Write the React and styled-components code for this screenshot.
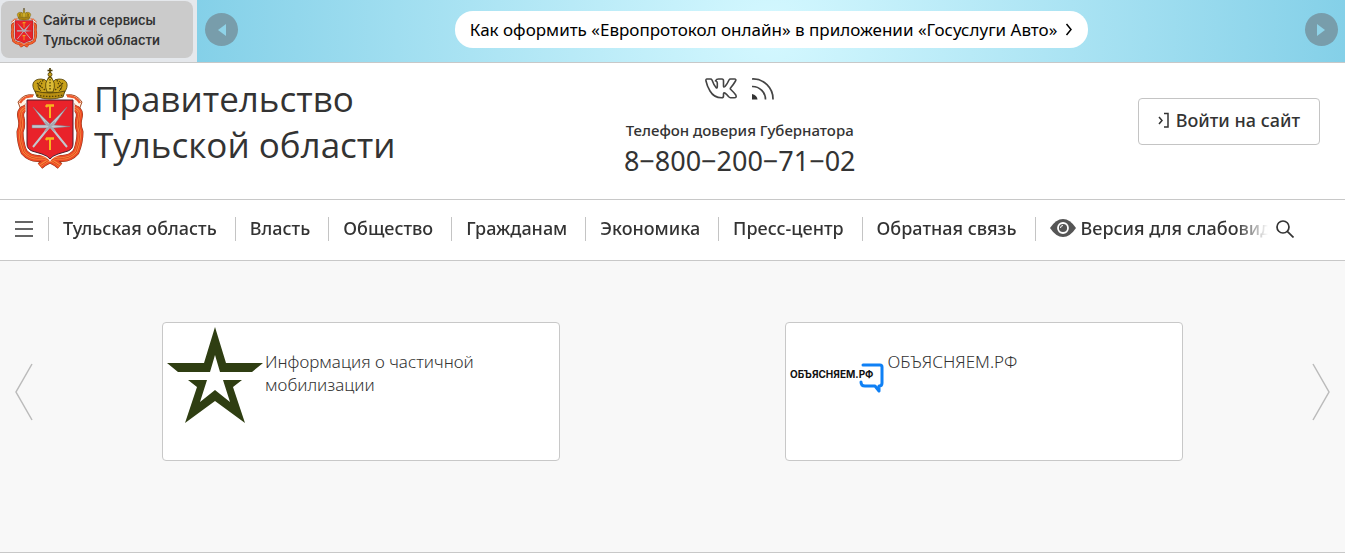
import React from 'react'
import styled, { createGlobalStyle } from 'styled-components'

const menu = [
    'Тульская область',
    'Власть',
    'Общество',
    'Гражданам',
    'Экономика',
    'Пресс-центр',
    'Обратная связь',
]

const ribbon = 'M10 40 Q3 42 5 50 Q7 57 4 64 Q4 74 8 84 Q15 92 26 90 Q36 91 44 98 M58 40 Q65 42 63 50 Q61 57 64 64 Q64 74 60 84 Q53 92 42 90 Q32 91 24 98'

const Emblem = ({ className }) => (
    <svg className={className} viewBox="0 0 68 102" aria-hidden="true">
        {/* ribbon */}
        <g fill="none" strokeLinejoin="round">
            <path d="M18 27 Q8 25 2 34 L5 42 L9 37 L12 32 M50 27 Q60 25 66 34 L63 42 L59 37 L56 32" fill="#fff3e4" stroke="#a64a20" strokeWidth="1" />
            <path d="M17 28 Q8 28 4 35 M51 28 Q60 28 64 35" stroke="#ee5a2c" strokeWidth="2.500" />
            <path d={ribbon} stroke="#8a3517" strokeWidth="7" />
            <path d={ribbon} stroke="#ec4a26" strokeWidth="6" />
            <path d={ribbon} stroke="#f98a3c" strokeWidth="2.400" />
            <path d={ribbon} stroke="#dd4520" strokeWidth="1" />
        </g>
        {/* shield */}
        <path d="M11 32 H57 V76 Q57 81 52 83 L42 86 Q36 88 34 91 Q32 88 26 86 L16 83 Q11 81 11 76 Z" fill="#e9222a" stroke="#fff" strokeWidth="3" />
        <path d="M11 32 H57 V76 Q57 81 52 83 L42 86 Q36 88 34 91 Q32 88 26 86 L16 83 Q11 81 11 76 Z" fill="#e9222a" stroke="#4f1a28" strokeWidth="1" />
        <g stroke="#f7b51e" fill="none">
            <path d="M34 37 V50 M34 71 V82" strokeWidth="2" />
            <path d="M30 39 L31 37.500 H38 M30 72 L31 70.500 H38" strokeWidth="2.500" />
        </g>
        <g fill="#c3c6cd" stroke="#7b7f89" strokeWidth="0.500">
            <path d="M17 39 L32 60 L35 57 Z" />
            <path d="M51 39 L36 60 L33 57 Z" />
            <path d="M16 57 H38 L54 58.500 L38 60 H16 Z" />
        </g>
        <path d="M34 58 L51 79 M34 58 L17 79" stroke="#c3c6cd" strokeWidth="2" />
        <path d="M29 54 L39 63 M39 54 L29 63" stroke="#a5a9b2" strokeWidth="2" />
        {/* crown */}
        <g stroke="#4c3c06" strokeWidth="0.800" fill="#c9a21a">
            <path d="M20 25 C14 17 17 11 25 11 Q30 11 31 14 Q32 8 34 8 Q36 8 37 14 Q38 11 43 11 C51 11 54 17 48 25 Z" />
            <path d="M19 23 Q34 27 49 23 L47 29 Q34 33 21 29 Z" fill="#b98f12" />
            <path d="M31 24 Q27 14 34 9 Q41 14 37 24 Z" fill="#dcbc35" />
            <path d="M25 23 Q19 18 25 13 M43 23 Q49 18 43 13" fill="none" />
            <circle cx="34" cy="6.500" r="2" />
            <path d="M34 5 V0 M31.500 2.500 H36.500" strokeWidth="1.600" />
        </g>
        <path d="M21 27 Q34 30 47 27 M21 15 L29 22 M47 15 L39 22 M27 12 L23 22 M41 12 L45 22 M34 11 V23" stroke="#544307" strokeWidth="1.300" strokeDasharray="1.500 1.500" fill="none" />
    </svg>
)

const VkIcon = () => (
    <svg width="32" height="21" viewBox="0 0 32 21" fill="none" stroke="#444" strokeWidth="1.6" strokeLinejoin="round" aria-hidden="true">
        <path d="M2 1 H5.500 Q6.500 1 7 2 Q9 7.500 11 9.500 Q12.300 10.500 12.300 8.500 V5 Q12.300 3.500 10.500 2.800 Q11.500 1 13.500 1 H17 Q18.500 1 18.500 2.800 V8 Q18.500 9.800 20 8.500 Q22.500 5.500 24 2 Q24.500 1 25.500 1 H29.500 Q31.500 1 30.500 3 Q28.500 6.500 25.500 10 Q25 10.800 25.800 11.500 Q29 14.500 30.800 17 Q32 19.800 29.200 19.800 H25.500 Q24.500 19.800 23.500 18.600 Q21.500 16 19.800 15 Q18.500 14.500 18.500 16 V18 Q18.500 19.800 16.500 19.800 Q9 19.800 5 13 Q2 8 1 3 Q0.600 1 2 1 Z" />
    </svg>
)

const RssIcon = () => (
    <svg width="22" height="22" viewBox="0 0 22 22" fill="none" stroke="#444" strokeWidth="1.7" aria-hidden="true">
        <path d="M0 1 A20 20 0 0 1 21 21.500" />
        <path d="M0 8.500 A13 13 0 0 1 13.500 21.500" />
        <path d="M0 16 Q5 17 5.500 21.500 H0 Z" fill="#333" stroke="none" />
    </svg>
)

const StarLogo = () => (
    <svg width="100" height="100" viewBox="0 0 100 100" fill="#2f3e12" aria-hidden="true">
        <path d="M50 1 L61 37 H98 L87 46 H55 L50 29 L45 46 H13 L2 37 H39 Z" />
        <path d="M23 54 H42 L35 76 L50 64 L65 76 L58 54 H77 L68 61 L80 97 L50 75 L20 97 L32 61 Z" />
    </svg>
)

const ExplainLogo = () => (
    <svg width="100" height="100" viewBox="0 0 100 100" aria-hidden="true">
        <path d="M75 39 H92 Q94 39 94 41 V57 Q94 60 91 60 M73 56 Q73 60 77 60 H87 L91 65 V60" fill="none" stroke="#0f80f5" strokeWidth="3" strokeLinejoin="round" strokeLinecap="round" />
        <LogoText x="2" y="52">ОБЪЯСНЯЕМ.РФ</LogoText>
    </svg>
)

const App = () => {
    return (
        <Page>
            <GlobalStyle />
            <TopBar>
                <ServicesWrapper>
                    <ServicesLink href="#services">
                        <SmallEmblem />
                        <span>Сайты и сервисы<br />Тульской области</span>
                    </ServicesLink>
                </ServicesWrapper>
                <Banner>
                    <RoundButton aria-label="Назад">
                        <svg width="8" height="12" viewBox="0 0 8 12"><path d="M8 0 V12 L0 6 Z" fill="#8fd3e8" /></svg>
                    </RoundButton>
                    <BannerLink href="#europrotocol">
                        Как оформить «Европротокол онлайн» в приложении «Госуслуги Авто»
                        <svg width="8" height="13" viewBox="0 0 8 13" fill="none" stroke="#000" strokeWidth="1.5"><path d="M1.500 1 L6 6.500 L1.500 12" /></svg>
                    </BannerLink>
                    <RoundButton aria-label="Вперёд">
                        <svg width="8" height="12" viewBox="0 0 8 12"><path d="M0 0 V12 L8 6 Z" fill="#8fd3e8" /></svg>
                    </RoundButton>
                </Banner>
            </TopBar>
            <Header>
                <Brand href="#home">
                    <LargeEmblem />
                    <BrandName>Правительство<br />Тульской области</BrandName>
                </Brand>
                <Contacts>
                    <Socials>
                        <a href="#vk" aria-label="ВКонтакте"><VkIcon /></a>
                        <a href="#rss" aria-label="RSS"><RssIcon /></a>
                    </Socials>
                    <PhoneLabel>Телефон доверия Губернатора</PhoneLabel>
                    <Phone href="tel:88002007102">8−800−200−71−02</Phone>
                </Contacts>
                <LoginWrapper>
                    <LoginButton>
                        <svg width="12" height="16" viewBox="0 0 12 16" fill="none" stroke="#333" strokeWidth="1.5"><path d="M1 5 L4 8.500 L1 12 M6 1.500 H10 V15 H6" /></svg>
                        Войти на сайт
                    </LoginButton>
                </LoginWrapper>
            </Header>
            <Nav>
                <IconButton aria-label="Меню">
                    <svg width="18" height="16" viewBox="0 0 18 16" stroke="#333" strokeWidth="1.6"><path d="M0 1 H18 M0 8 H18 M0 15 H18" /></svg>
                </IconButton>
                <MenuList>
                    {
                        menu.map(item => (
                            <MenuItem key={item}><MenuLink href="#menu">{item}</MenuLink></MenuItem>
                        ))
                    }
                    <MenuItem>
                        <MenuLink href="#vision">
                            <svg width="26" height="18" viewBox="0 0 26 18"><path d="M0 9 Q6 0 13 0 T26 9 Q20 18 13 18 T0 9 Z" fill="#555" /><circle cx="13" cy="9" r="5" fill="#555" stroke="#fff" strokeWidth="1.800" /><path d="M13 6.500 A2.500 2.500 0 0 0 10.500 9" fill="none" stroke="#fff" strokeWidth="1" /></svg>
                            Версия для слабовидящих
                        </MenuLink>
                    </MenuItem>
                </MenuList>
                <IconButton aria-label="Поиск">
                    <svg width="18" height="18" viewBox="0 0 18 18" fill="none" stroke="#333" strokeWidth="1.700"><circle cx="7" cy="7" r="6" /><path d="M11.300 11.300 L17.500 17.500" /></svg>
                </IconButton>
            </Nav>
            <Slider>
                <SliderButton aria-label="Предыдущий слайд">
                    <svg width="18" height="58" viewBox="0 0 18 58" fill="none" stroke="#bbb" strokeWidth="1.500"><path d="M17 1 L1 29 L17 57" /></svg>
                </SliderButton>
                <Slides>
                    <Card href="#mobilization">
                        <StarLogo />
                        <CardText>Информация о частичной мобилизации</CardText>
                    </Card>
                    <Card href="#explain">
                        <ExplainLogo />
                        <CardText>ОБЪЯСНЯЕМ.РФ</CardText>
                    </Card>
                </Slides>
                <SliderButton aria-label="Следующий слайд">
                    <svg width="18" height="58" viewBox="0 0 18 58" fill="none" stroke="#bbb" strokeWidth="1.500"><path d="M1 1 L17 29 L1 57" /></svg>
                </SliderButton>
            </Slider>
        </Page>
    )
}

const GlobalStyle = createGlobalStyle`
* {
  box-sizing: border-box;
}
body {
  margin: 0;
  background: #fff;
}
a {
  color: inherit;
  text-decoration: none;
}
button {
  font-family: inherit;
  color: inherit;
  cursor: pointer;
}
svg {
  display: block;
  flex-shrink: 0;
}
`

const Page = styled.div`
font-family: "Noto Sans", "Open Sans", sans-serif;
color: #333;
`

const TopBar = styled.div`
display: flex;
height: 63px;
border-bottom: 1px solid #c8c8c8;
`

const ServicesWrapper = styled.div`
width: 197px;
flex-shrink: 0;
padding: 1px 4px 4px 1px;
background: #e5e8ec;
`

const ServicesLink = styled.a`
display: flex;
align-items: center;
gap: 5px;
height: 57px;
padding: 0 9px;
border-radius: 8px;
background: #cbcbcb;
font-family: Inter, sans-serif;
font-size: 13px;
font-weight: 600;
line-height: 20px;
white-space: nowrap;
`

const SmallEmblem = styled(Emblem)`
width: 28px;
height: 40px;
margin-bottom: 4px;
`

const Banner = styled.div`
flex: 1;
display: flex;
align-items: flex-start;
justify-content: space-between;
padding: 11px 7px 0 8px;
background: radial-gradient(circle, #d4f8ff 0%, #84d0e8 100%);
`

const RoundButton = styled.button`
display: flex;
align-items: center;
justify-content: center;
width: 33px;
height: 33px;
margin-top: 2px;
padding: 0;
border: none;
border-radius: 50%;
background: #789dab;
`

const BannerLink = styled.a`
display: flex;
align-items: center;
gap: 8px;
height: 37px;
padding: 0 15px;
border-radius: 18px;
background: #fff;
color: #000;
font-size: 17px;
`

const Header = styled.header`
display: grid;
grid-template-columns: 45% 21% 34%;
height: 137px;
padding: 0 25px 0 16px;
border-bottom: 1px solid #c8c8c8;
`

const Brand = styled.a`
display: flex;
align-items: flex-start;
gap: 10px;
padding-top: 5px;
`

const LargeEmblem = styled(Emblem)`
width: 68px;
height: 102px;
`

const BrandName = styled.span`
padding-top: 8px;
font-family: "Open Sans", sans-serif;
font-size: 35px;
line-height: 46px;
white-space: nowrap;
`

const Contacts = styled.div`
display: flex;
flex-direction: column;
align-items: center;
padding-top: 15px;
white-space: nowrap;
`

const Socials = styled.div`
display: flex;
gap: 15px;
height: 42px;
`

const PhoneLabel = styled.div`
font-size: 15px;
font-weight: 500;
line-height: 20px;
`

const Phone = styled.a`
font-size: 27px;
line-height: 42px;
`

const LoginWrapper = styled.div`
display: flex;
align-items: flex-start;
justify-content: flex-end;
padding-top: 35px;
`

const LoginButton = styled.button`
display: flex;
align-items: center;
gap: 6px;
height: 47px;
padding: 0 19px 4px;
border: 1px solid #c4c4c4;
border-radius: 4px;
background: #fff;
font-size: 18px;
font-weight: 500;
`

const Nav = styled.nav`
display: flex;
align-items: center;
height: 61px;
padding: 0 51px 2px 15px;
border-bottom: 1px solid #c8c8c8;
`

const IconButton = styled.button`
padding: 0;
border: none;
background: none;
`

const MenuList = styled.ul`
flex: 1;
min-width: 0;
display: flex;
gap: 18px;
margin: 0 8px 0 15px;
padding: 0;
overflow: hidden;
list-style: none;
mask-image: linear-gradient(to left, transparent, #000 32px);
`

const MenuItem = styled.li`
flex-shrink: 0;
height: 24px;
padding-left: 14px;
border-left: 1px solid #c4c4c4;
`

const MenuLink = styled.a`
display: flex;
align-items: center;
gap: 5px;
height: 22px;
font-size: 18px;
font-weight: 500;
line-height: 22px;
white-space: nowrap;
`

const Slider = styled.section`
display: flex;
align-items: center;
justify-content: space-between;
height: 292px;
padding: 0 15px 30px;
border-bottom: 1px solid #c8c8c8;
background: #f8f8f8;
`

const SliderButton = styled(IconButton)`
width: 35px;
display: flex;
&:last-child {
  justify-content: flex-end;
}
`

const Slides = styled.div`
flex: 1;
display: grid;
grid-template-columns: 1fr 1fr;
justify-items: center;
`

const Card = styled.a`
display: flex;
width: 64%;
height: 139px;
padding: 3px 2px;
border: 1px solid #c8c8c8;
border-radius: 4px;
background: #fff;
`

const CardText = styled.span`
padding-top: 24px;
font-size: 17px;
font-weight: 300;
line-height: 23px;
`

const LogoText = styled.text`
font-family: Inter, sans-serif;
font-size: 10px;
font-weight: 700;
fill: #111;
`

export default App
